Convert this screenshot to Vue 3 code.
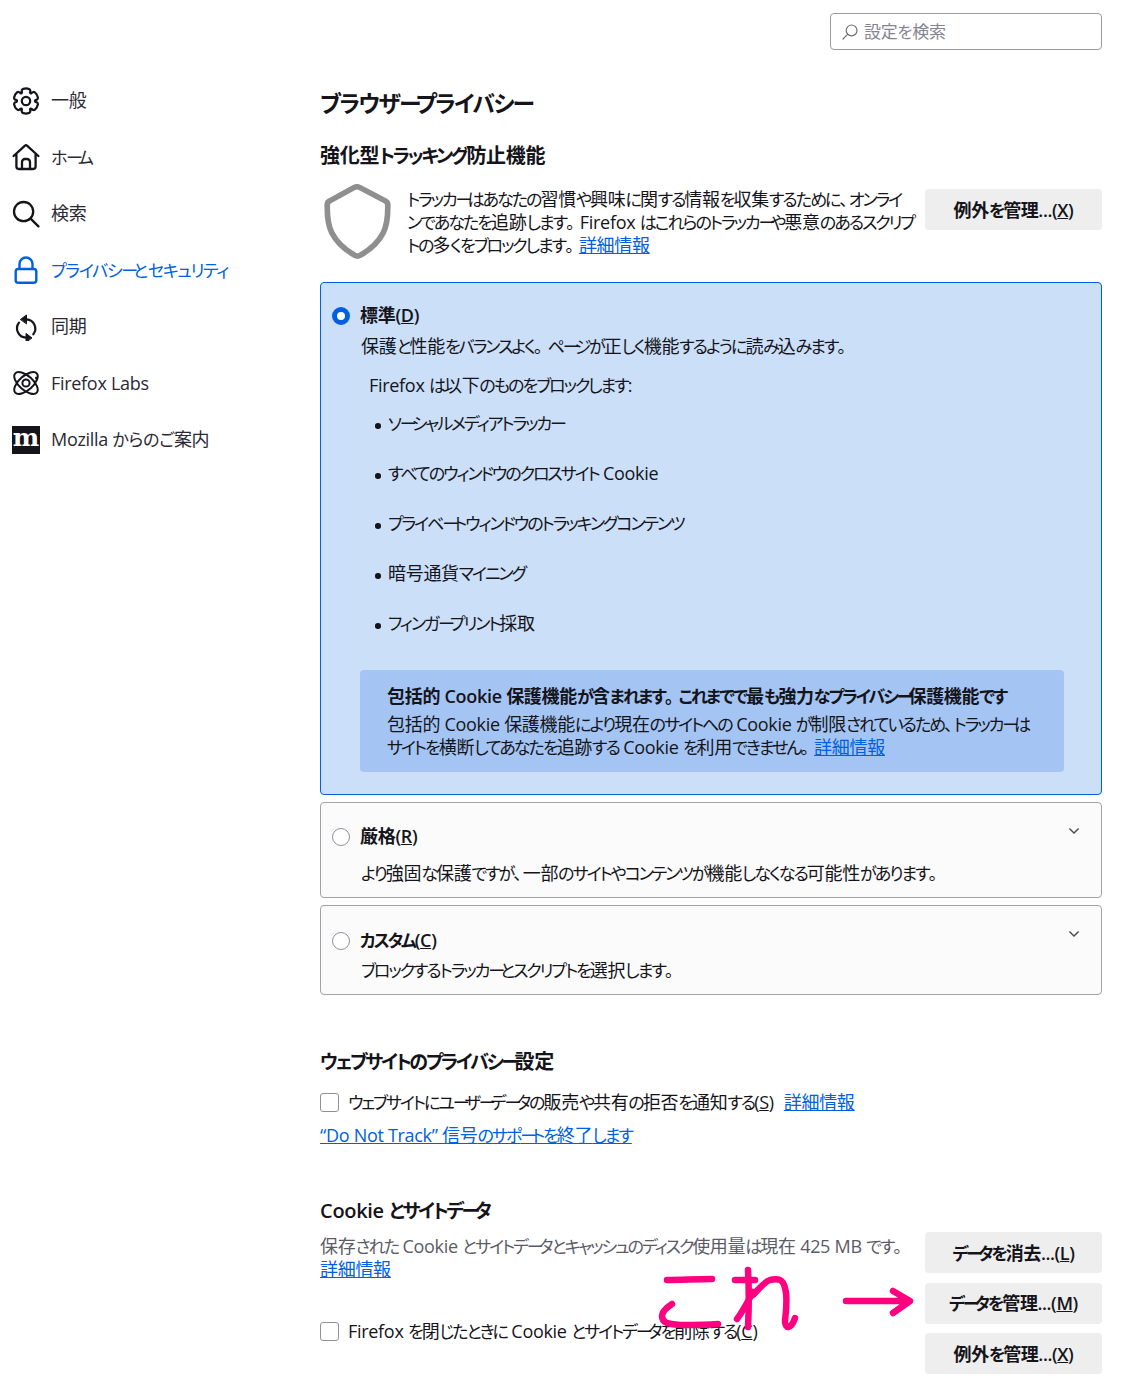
<script setup>
import { onMounted, ref } from 'vue'

const root = ref(null)

// The reference's UI font sets kana narrower than kanji; mark kana runs so CSS can tighten them.
const runs = [
  [/\u3001/, 'cm'],
  [/\u3002/, 'pu'],
  [/\u30fc/, 'cho'],
  [/[\u30a0-\u30fb\u30fd-\u30ff]/, 'ka'],
  [/[\u3040-\u309f]/, 'hi']
]
const classify = (ch) => {
  for (const [re, cls] of runs) if (re.test(ch)) return cls
  return ''
}
onMounted(() => {
  const walker = document.createTreeWalker(root.value, NodeFilter.SHOW_TEXT)
  const nodes = []
  while (walker.nextNode()) nodes.push(walker.currentNode)
  for (const node of nodes) {
    if (!/[\u3001\u3002\u3040-\u30ff]/.test(node.nodeValue)) continue
    const frag = document.createDocumentFragment()
    let cur = ''
    let curCls = null
    const flush = () => {
      if (!cur) return
      if (curCls) {
        const s = document.createElement('span')
        s.className = 'kn ' + curCls
        s.textContent = cur
        frag.appendChild(s)
      } else {
        frag.appendChild(document.createTextNode(cur))
      }
      cur = ''
    }
    for (const ch of node.nodeValue) {
      const c = classify(ch)
      if (c !== curCls) {
        flush()
        curCls = c
      }
      cur += ch
    }
    flush()
    node.parentNode.replaceChild(frag, node)
  }
})

const gearPath = (() => {
  const cx = 14, cy = 14, ro = 12.4, ri = 8.9
  const pt = (r, deg) => {
    const a = (deg * Math.PI) / 180
    return `${(cx + r * Math.cos(a)).toFixed(2)} ${(cy + r * Math.sin(a)).toFixed(2)}`
  }
  let d = ''
  for (let i = 0; i < 6; i++) {
    const a = -90 + i * 60
    d += `${i === 0 ? 'M' : 'L'}${pt(ri + 0.6, a - 25)} Q${pt(ro, a - 24)} ${pt(ro, a - 12)} Q${pt(ro + 0.6, a)} ${pt(ro, a + 12)} Q${pt(ro, a + 24)} ${pt(ri + 0.6, a + 25)} Q${pt(ri - 0.4, a + 30)} `
    d += pt(ri + 0.6, a + 35) + ' '
  }
  return d + 'Z'
})()

const nav = [
  { key: 'gear', label: '一般' },
  { key: 'home', label: 'ホーム' },
  { key: 'search', label: '検索' },
  { key: 'lock', label: 'プライバシーとセキュリティ', active: true },
  { key: 'sync', label: '同期' },
  { key: 'labs', label: 'Firefox Labs' },
  { key: 'moz', label: 'Mozilla からのご案内' }
]
const blocked = [
  'ソーシャルメディアトラッカー',
  'すべてのウィンドウのクロスサイト Cookie',
  'プライベートウィンドウのトラッキングコンテンツ',
  '暗号通貨マイニング',
  'フィンガープリント採取'
]
</script>

<template>
  <div ref="root" class="page">
    <aside class="side">
      <div v-for="n in nav" :key="n.key" class="nav" :class="{ active: n.active }">
        <span class="ico">
          <svg v-if="n.key === 'gear'" viewBox="0 0 28 28" width="28" height="28" fill="none" stroke="currentColor" stroke-width="2.2" stroke-linejoin="round">
            <path :d="gearPath" />
            <circle cx="14" cy="14" r="4.2" />
          </svg>
          <svg v-else-if="n.key === 'home'" viewBox="0 0 28 28" width="28" height="28" fill="none" stroke="currentColor" stroke-width="2.3" stroke-linejoin="round" stroke-linecap="round">
            <path d="M1.6 13 13 2.6a1.5 1.5 0 0 1 2 0L26.4 13M4.4 11v12.6a2.4 2.4 0 0 0 2.4 2.4h14.4a2.4 2.4 0 0 0 2.4-2.4V11" />
            <path d="M10 26v-7a3 3 0 0 1 3-3h2a3 3 0 0 1 3 3v7" />
          </svg>
          <svg v-else-if="n.key === 'search'" viewBox="0 0 28 28" width="28" height="28" fill="none" stroke="currentColor" stroke-width="2.3" stroke-linecap="round">
            <circle cx="11.6" cy="11.6" r="9.6" />
            <path d="m18.6 18.6 7.8 7.8" />
          </svg>
          <svg v-else-if="n.key === 'lock'" viewBox="0 0 28 28" width="28" height="28" fill="none" stroke="currentColor" stroke-width="2.4" stroke-linejoin="round">
            <path d="M7.5 13V8a6.5 6.5 0 0 1 13 0v5" />
            <rect x="3.7" y="13" width="20.6" height="13.8" rx="2.6" />
          </svg>
          <svg v-else-if="n.key === 'sync'" viewBox="0 0 28 28" width="28" height="28" fill="none" stroke="currentColor" stroke-width="2.2" stroke-linecap="round">
            <path d="M14.5 6.3a9.3 9.3 0 0 1 6.8 15" />
            <path d="M14 24.7a9.3 9.3 0 0 1-7-15" />
            <path d="M8.7 6.3 14.5 2v8.5Z" fill="currentColor" stroke-linejoin="round" stroke-width="1" />
            <path d="M19.7 24.7 14 20.5V29Z" fill="currentColor" stroke-linejoin="round" stroke-width="1" />
          </svg>
          <svg v-else-if="n.key === 'labs'" viewBox="0 0 28 28" width="28" height="28" fill="none" stroke="currentColor" stroke-width="2">
            <ellipse cx="14" cy="14" rx="14.5" ry="7" transform="rotate(42 14 14)" />
            <ellipse cx="14" cy="14" rx="14.5" ry="7" transform="rotate(-42 14 14)" />
            <circle cx="14" cy="14" r="3.6" />
            <circle cx="24.5" cy="9" r="1.5" fill="currentColor" stroke="none" />
          </svg>
          <span v-else class="moz">m</span>
        </span>
        <span>{{ n.label }}</span>
      </div>
    </aside>

    <main class="main">
      <div class="search-row">
        <div class="search">
          <svg viewBox="0 0 16 16" width="16" height="16" fill="none" stroke="#6f6f78" stroke-width="1.2" stroke-linecap="round">
            <circle cx="9.6" cy="6.4" r="5.4" />
            <path d="M5.6 10.4 1 15" />
          </svg>
          <span>設定を検索</span>
        </div>
      </div>

      <h1>ブラウザープライバシー</h1>
      <h2 class="etp-title">強化型トラッキング防止機能</h2>

      <div class="intro">
        <svg class="shield" viewBox="0 0 70 76" width="70" height="76" preserveAspectRatio="none" fill="none" stroke="#8f8f8f" stroke-width="5.5" stroke-linejoin="round">
          <path d="M32 3.6a6 6 0 0 1 6 0l24.5 13.2a4.5 4.5 0 0 1 2.4 4.2c.2 10-.5 20-4.5 28-4.6 9.2-13.7 17.4-22.4 22.4a5 5 0 0 1-5 0c-8.7-5-17.8-13.2-22.4-22.4-4-8-4.7-18-4.5-28a4.5 4.5 0 0 1 2.4-4.2z" />
        </svg>
        <p>トラッカーはあなたの習慣や興味に関する情報を収集するために、オンライ<br />ンであなたを追跡します。Firefox はこれらのトラッカーや悪意のあるスクリプ<br />トの多くをブロックします。<a>詳細情報</a></p>
        <button class="btn intro-btn">例外を管理...(<u>X</u>)</button>
      </div>

      <section class="box selected">
        <div class="radio-row">
          <span class="radio on"></span>
          <b>標準(<u>D</u>)</b>
        </div>
        <p class="desc std-desc">保護と性能をバランスよく。ページが正しく機能するように読み込みます。</p>
        <p class="blocks">Firefox は以下のものをブロックします:</p>
        <ul>
          <li v-for="b in blocked" :key="b">{{ b }}</li>
        </ul>
        <div class="info">
          <b>包括的 Cookie 保護機能が含まれます。これまでで最も強力なプライバシー保護機能です</b>
          <p class="info-text">包括的 Cookie 保護機能により現在のサイトへの Cookie が制限されているため、トラッカーは<br />サイトを横断してあなたを追跡する Cookie を利用できません。<a>詳細情報</a></p>
        </div>
      </section>

      <section class="box plain strict">
        <svg class="chev" viewBox="0 0 12 8" width="12" height="8" fill="none" stroke="#4a4a55" stroke-width="1.4"><path d="m1.4 1.4 4.6 4.6 4.6-4.6" /></svg>
        <div class="radio-row">
          <span class="radio"></span>
          <b>厳格(<u>R</u>)</b>
        </div>
        <p class="desc strict-desc">より強固な保護ですが、一部のサイトやコンテンツが機能しなくなる可能性があります。</p>
      </section>

      <section class="box plain custom">
        <svg class="chev" viewBox="0 0 12 8" width="12" height="8" fill="none" stroke="#4a4a55" stroke-width="1.4"><path d="m1.4 1.4 4.6 4.6 4.6-4.6" /></svg>
        <div class="radio-row">
          <span class="radio"></span>
          <b>カスタム(<u>C</u>)</b>
        </div>
        <p class="desc custom-desc">ブロックするトラッカーとスクリプトを選択します。</p>
      </section>

      <h2 class="web-title">ウェブサイトのプライバシー設定</h2>
      <div class="check-row gpc">
        <span class="check"></span>
        <span>ウェブサイトにユーザーデータの販売や共有の拒否を通知する(<u>S</u>)</span>
        <a class="gpc-link">詳細情報</a>
      </div>
      <a class="dnt">“Do Not Track” 信号のサポートを終了します</a>

      <h2 class="cookie-title">Cookie とサイトデータ</h2>
      <div class="cookie">
        <div class="cookie-left">
          <p class="muted">保存された Cookie とサイトデータとキャッシュのディスク使用量は現在 425 MB です。<br /><a>詳細情報</a></p>
          <div class="check-row del">
            <span class="check"></span>
            <span>Firefox を閉じたときに Cookie とサイトデータを削除する(<u>C</u>)</span>
          </div>
        </div>
        <div class="cookie-btns">
          <button class="btn">データを消去...(<u>L</u>)</button>
          <button class="btn">データを管理...(<u>M</u>)</button>
          <button class="btn">例外を管理...(<u>X</u>)</button>
        </div>
      </div>
    </main>

    <svg class="ink" viewBox="0 0 1124 1386" width="1124" height="1386" fill="none" stroke="#ff0080" stroke-width="6.5" stroke-linecap="round" stroke-linejoin="round">
      <path d="M667 1280c14 0 30-1 45-1" />
      <path d="M672 1304c-6 4-10 8-10 12 0 7 6 8 18 9 13 0 26 0 38-1" />
      <path d="M748 1270c1 18 1 38 0 57" />
      <path d="M735 1280h20M753 1292c-5 9-10 19-16 27" />
      <path d="M753 1295c6-6 11-13 17-15 8-2 13-1 15 8 3 10 1 22 0 33 0 8 6 9 10-3" />
      <path d="M846 1301h60M893 1291l17 10-17 12" />
    </svg>
  </div>
</template>

<style>
body { margin: 0; background: #fff; }
/* kana runs are created after mount, so these rules live outside the scoped block */
.kn { font-size: .95em; }
.ka { letter-spacing: -.125em; }
.hi { letter-spacing: -.118em; }
.cho { letter-spacing: -.3em; }
.pu { letter-spacing: .3em; }
.cm { letter-spacing: .05em; }
h1 .ka { letter-spacing: -.075em; }
h1 .cho { letter-spacing: -.25em; }
.nav .ka { letter-spacing: -.08em; }
.nav .hi { letter-spacing: -.02em; }
.search .hi { letter-spacing: 0; }
</style>

<style scoped>
.page {
  position: relative;
  width: 1124px;
  height: 1386px;
  overflow: hidden;
  display: flex;
  background: #fff;
  color: #15141a;
  font-family: "Open Sans", "Noto Sans CJK JP", sans-serif;
  font-size: 18px;
  line-height: 23px;
  letter-spacing: -.3px;
  font-feature-settings: "palt";
}
p, h1, h2, ul { margin: 0; padding: 0; }
a { color: #0060df; text-decoration: underline; }
.side {
  width: 320px;
  flex: none;
  box-sizing: border-box;
  padding: 72.5px 0 0 12px;
}
.nav {
  display: flex;
  align-items: center;
  gap: 11px;
  height: 56.5px;
  color: #2b2a33;
}
.nav.active { color: #0060df; }
.ico { width: 28px; height: 28px; display: flex; align-items: center; justify-content: center; color: #15141a; }
.active .ico { color: #0060df; }
.moz {
  width: 28px;
  height: 28px;
  background: #15141a;
  color: #fff;
  font: 700 25px/23px "DejaVu Serif", serif;
  letter-spacing: 0;
  text-align: center;
}
.main { width: 782px; flex: none; }
.search-row { display: flex; justify-content: flex-end; padding-top: 13px; }
.search {
  box-sizing: border-box;
  width: 272px;
  height: 37px;
  border: 1px solid #9a9a9a;
  border-radius: 4px;
  display: flex;
  align-items: center;
  gap: 6px;
  padding-left: 11px;
  color: #85858f;
  font-size: 17px;
}
h1 { font-size: 24px; line-height: 32px; font-weight: 700; margin-top: 37px; }
h2 { font-size: 20px; line-height: 28px; font-weight: 600; }
.etp-title { margin-top: 22px; }
.intro { display: flex; margin-top: 18px; height: 94px; }
.shield { flex: none; margin: -4px 0 0 1px; width: 72px; }
.intro p { width: 517px; flex: none; margin-left: 14px; white-space: nowrap; }
.btn {
  box-sizing: border-box;
  width: 177px;
  height: 41px;
  border: 0;
  border-radius: 4px;
  background: #eeeeee;
  color: #15141a;
  font: inherit;
  font-weight: 600;
  letter-spacing: -.4px;
  padding: 1px 0 0;
}
.intro-btn { flex: none; margin-left: auto; margin-top: 1px; }
.box {
  box-sizing: border-box;
  position: relative;
  border-radius: 4px;
  padding-left: 11px;
}
.selected {
  height: 513px;
  border: 1px solid #0060df;
  background: #cbdff8;
  padding-top: 21px;
}
.plain {
  border: 1px solid #a3a3a3;
  background: #fbfbfb;
  margin-top: 7px;
}
.strict { height: 96px; padding-top: 22px; }
.custom { height: 90px; padding-top: 23px; }
.chev { position: absolute; right: 21px; top: 24px; }
.radio-row { display: flex; align-items: center; gap: 10px; }
.radio-row b { font-weight: 600; }
.radio {
  box-sizing: border-box;
  width: 18px;
  height: 18px;
  border-radius: 50%;
  border: 1px solid #8f8f9d;
  background: #fff;
  flex: none;
}
.radio.on { border: 5px solid #0060df; }
.desc { margin-left: 29px; white-space: nowrap; }
.std-desc { margin-top: 8px; }
.strict-desc { margin-top: 14px; }
.custom-desc { margin-top: 7px; }
.blocks { margin: 16px 0 0 37px; }
ul { list-style: none; margin: 15px 0 0 45px; }
li { height: 50px; line-height: 23px; position: relative; padding-left: 11px; }
li::before {
  content: "";
  position: absolute;
  left: -2px;
  top: 11px;
  width: 5.5px;
  height: 5.5px;
  border-radius: 50%;
  background: #15141a;
}
.info {
  box-sizing: border-box;
  width: 704px;
  height: 102px;
  margin: 8px 0 0 28px;
  padding: 15px 0 0 27px;
  background: #a4c5f3;
  border-radius: 4px;
  white-space: nowrap;
}
.info b { font-weight: 600; display: block; }
.info-text { margin-top: 5px; }
.web-title { margin-top: 53px; }
.check-row { display: flex; align-items: center; white-space: nowrap; }
.check {
  box-sizing: border-box;
  width: 19px;
  height: 19px;
  border: 1px solid #8f8f9d;
  border-radius: 3px;
  background: #fff;
  margin-right: 9px;
  flex: none;
}
.gpc { margin-top: 15px; }
.gpc-link { margin-left: 10px; }
.dnt { display: block; margin-top: 10px; }
.cookie-title { margin-top: 50px; }
.cookie { display: flex; justify-content: space-between; margin-top: 7px; }
.cookie-left { flex: none; white-space: nowrap; }
.muted { color: #5b5b66; margin-top: 3px; }
.del { margin-top: 39px; }
.cookie-btns { display: flex; flex-direction: column; gap: 9.5px; }
.ink { position: absolute; left: 0; top: 0; pointer-events: none; }
</style>
